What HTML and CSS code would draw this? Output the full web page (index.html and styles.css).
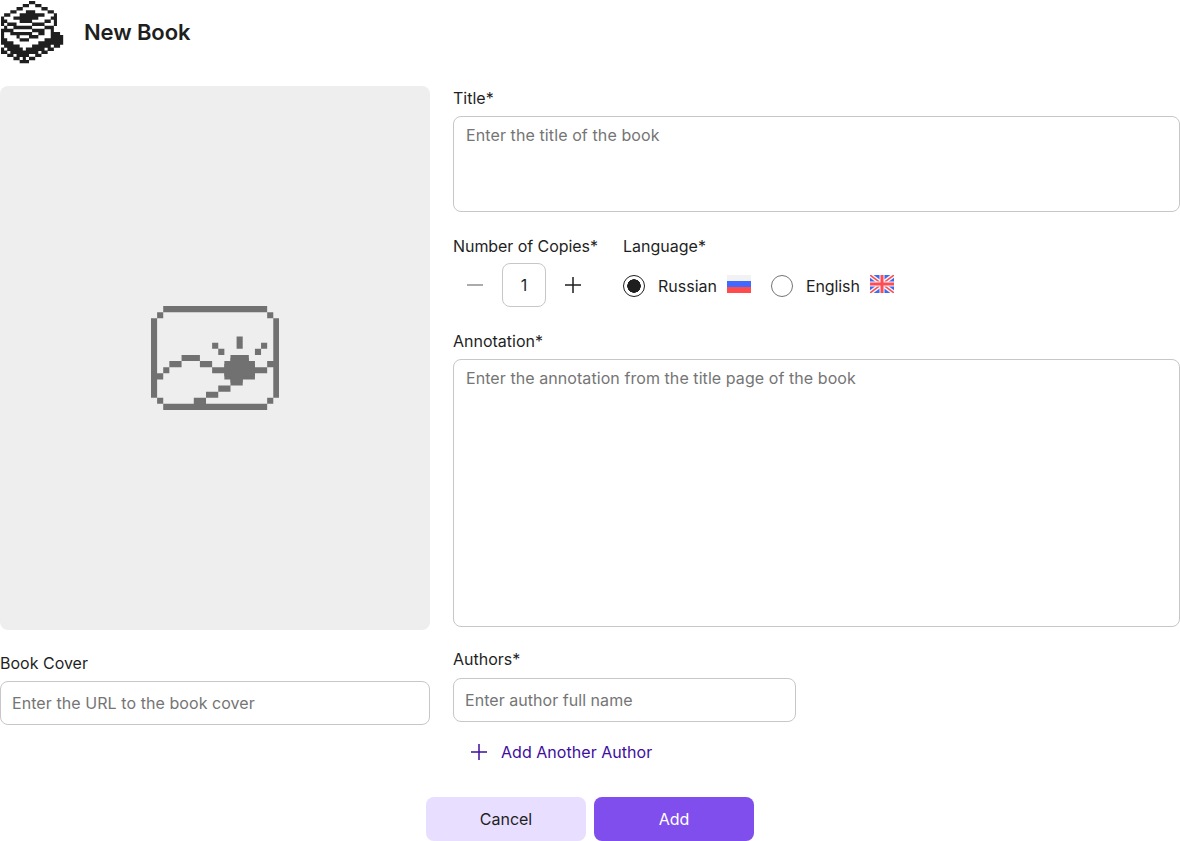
FILE: index.html
```html
<!DOCTYPE html>
<html lang="en">
<head>
<meta charset="utf-8">
<title>New Book</title>
<link rel="stylesheet" href="styles.css">
</head>
<body>
<header class="header">
  <svg class="logo" viewBox="0 0 20 20" fill="none" stroke="#1f1f1f" stroke-width="1.1">
    <path d="M9 .5h2M7 1.5h2M11 1.5h2M5 2.5h2M13 2.5h2M3 3.5h2M8 3.5h3M15 3.5h2M1 4.5h2M6 4.5h8M17 4.5h1M0 5.5h1M4 5.5h8M16 5.5h2M0 6.5h2M6 6.5h4M14 6.5h2M17 6.5h1M0 7.5h1M2 7.5h3M10 7.5h4M17 7.5h1M1 8.5h1M4 8.5h6M14 8.5h3M0 9.5h4M10 9.5h4M16 9.5h1M0 10.5h1M3 10.5h7M12 10.5h2M16 10.5h3M0 11.5h1M5 11.5h1M9 11.5h3M16 11.5h4M0 12.5h2M6 12.5h3M14 12.5h6M0 13.5h4M12 13.5h7M19 13.5h1M1 14.5h5M10 14.5h6M17 14.5h2M0 15.5h1M2 15.5h5M8 15.5h6M15 15.5h2M0 16.5h2M3 16.5h9M13 16.5h2M2 17.5h2M5 17.5h4M11 17.5h2M4 18.5h2M7 18.5h1M9 18.5h2M6 19.5h3"/>
  </svg>
  <h1 class="heading">New Book</h1>
</header>
<form class="form">
  <div class="columns">
    <section class="cover-column">
      <div class="cover">
        <svg class="cover-icon" viewBox="0 0 21 17" fill="none" stroke="#717171">
          <path d="M2 .5h17M1 1.5h1M19 1.5h1M.5 2v13M20.5 2v13M1 15.5h1M19 15.5h1M2 16.5h17M14.5 5v2M10 6.5h1M18 6.5h1M11 7.5h1M17 7.5h1M5 8.5h3M3 9.5h2M8 9.5h2M19 9.5h1M2 10.5h1M10 10.5h9M1 11.5h1M13 8.5h3M12 9.5h5M12 11.5h5M13 12.5h2M11 13.5h2M9 14.5h2M7 15.5h2"/>
          <path d="M14 8v4.5M12 10h5M12 11h5M13 12h2M13 9h3"/>
        </svg>
      </div>
      <label class="label" for="cover">Book Cover</label>
      <input class="input cover-url" id="cover" placeholder="Enter the URL to the book cover">
    </section>
    <section class="details">
      <label class="label" for="title">Title*</label>
      <textarea class="input area title-area" id="title" placeholder="Enter the title of the book"></textarea>
      <div class="options">
        <div class="copies">
          <label class="label" for="copies">Number of Copies*</label>
          <div class="stepper">
            <button class="step minus" type="button" aria-label="Decrease"><svg class="sign" viewBox="0 0 16 16"><path d="M0 8h16"/></svg></button>
            <input class="input count" id="copies" value="1">
            <button class="step" type="button" aria-label="Increase"><svg class="sign" viewBox="0 0 16 16"><path d="M0 8h16M8 0v16"/></svg></button>
          </div>
        </div>
        <div class="language">
          <span class="label">Language*</span>
          <div class="choices">
            <label class="choice"><input class="radio" type="radio" name="language" checked><span>Russian</span>
              <svg class="flag" viewBox="0 0 24 18"><path fill="#f2f2f2" d="M0 0h24v6H0z"/><path fill="#4169ff" d="M0 6h24v6H0z"/><path fill="#ff4b4b" d="M0 12h24v6H0z"/></svg></label>
            <label class="choice english"><input class="radio" type="radio" name="language"><span>English</span>
              <svg class="flag" viewBox="0 0 24 18"><path fill="#4169ef" d="M0 0h24v18H0z"/><path stroke="#f5f5f5" stroke-width="4.4" d="M0 0l24 18M24 0L0 18"/><path stroke="#ff4b55" stroke-width="1.5" d="M0 0l24 18M24 0L0 18"/><path stroke="#f5f5f5" stroke-width="5" d="M12 0v18M0 9h24"/><path stroke="#ff4b55" stroke-width="3" d="M12 0v18M0 9h24"/></svg></label>
          </div>
        </div>
      </div>
      <label class="label" for="annotation">Annotation*</label>
      <textarea class="input area annotation-area" id="annotation" placeholder="Enter the annotation from the title page of the book"></textarea>
      <label class="label" for="author">Authors*</label>
      <input class="input author" id="author" placeholder="Enter author full name">
      <button class="add-author" type="button"><svg class="sign" viewBox="0 0 16 16"><path d="M0 8h16M8 0v16"/></svg>Add Another Author</button>
    </section>
  </div>
  <footer class="actions">
    <button class="button cancel" type="button">Cancel</button>
    <button class="button submit" type="button">Add</button>
  </footer>
</form>
</body>
</html>
```
FILE: styles.css
```css
* { box-sizing: border-box; }
body { margin: 0; background: #fff; color: #1f1f1f; font: 16px/20px Inter, sans-serif; overflow: hidden; }
button, input, textarea { font: inherit; color: inherit; }
button { border: 0; background: none; padding: 0; }
.header { display: flex; align-items: center; height: 66px; padding: 0 0 2px 1.4px; gap: 20.4px; }
.logo { width: 62.2px; height: 62.2px; margin-top: 1px; }
.heading { margin: 0; font-size: 22px; line-height: 28px; font-weight: 600; letter-spacing: -.1px; }
.columns { display: grid; grid-template-columns: 430px 727px; gap: 23px; height: 691px; padding-top: 20px; align-items: start; }
.cover-column, .details { display: flex; flex-direction: column; }
.cover { display: flex; align-items: center; justify-content: center; height: 544px; margin-bottom: 23px; border-radius: 8px; background: #eee; }
.cover-icon { width: 128.4px; height: 104px; margin-right: .6px; }
.label { display: block; height: 20px; }
.copies .label { letter-spacing: -.06px; }
.input { display: block; width: 100%; height: 44px; margin: 8px 0 0; padding: 0 11px; border: 1px solid #c7c7c7; border-radius: 8px; background: #fff; outline: 0; }
.input::placeholder { color: #757575; opacity: 1; }
.cover-url::placeholder, .annotation-area::placeholder { letter-spacing: .07px; }
.title-area::placeholder { letter-spacing: .1px; }
.author::placeholder, .add-author { letter-spacing: .04px; }
.area { padding: 8px 12px; resize: none; }
.details { padding-top: 2px; }
.title-area { height: 96px; }
.options { display: flex; gap: 25px; margin: 24px 0; }
.copies { width: 145px; }
.stepper { display: flex; align-items: center; height: 44px; margin-top: 7px; }
.step { display: grid; place-items: center; flex: none; width: 44px; height: 44px; }
.stepper .count { flex: none; width: 44px; margin: 0 5px; padding: 0; text-align: center; }
.sign { width: 16px; height: 16px; fill: none; stroke: currentColor; stroke-width: 1.5; }
.minus { color: #8f8f8f; }
.choices { display: flex; gap: 20px; margin-top: 19px; }
.choice { display: flex; align-items: center; height: 22px; }
.choice span { margin: 0 10px 0 13px; }
.english { letter-spacing: -.1px; }
.radio { appearance: none; width: 22px; height: 22px; margin: 0; border: 1px solid #757575; border-radius: 50%; }
.radio:checked { border-color: #1f1f1f; background: radial-gradient(circle, #1f1f1f 6.5px, #fff 7px); }
.flag { width: 24px; height: 18px; margin-bottom: 4px; }
.annotation-area { height: 268px; margin-bottom: 22px; }
.author { width: 343px; margin-top: 9px; }
.add-author { display: flex; align-items: center; align-self: flex-start; height: 44px; margin: 8px 0 0 18px; gap: 14px; color: #3e0e9e; }
.actions { display: flex; justify-content: center; gap: 8px; padding-top: 40px; }
.button { width: 160px; height: 44px; border-radius: 8px; }
.cancel { background: #e8deff; }
.submit { background: #804eec; color: #fff; }
```
